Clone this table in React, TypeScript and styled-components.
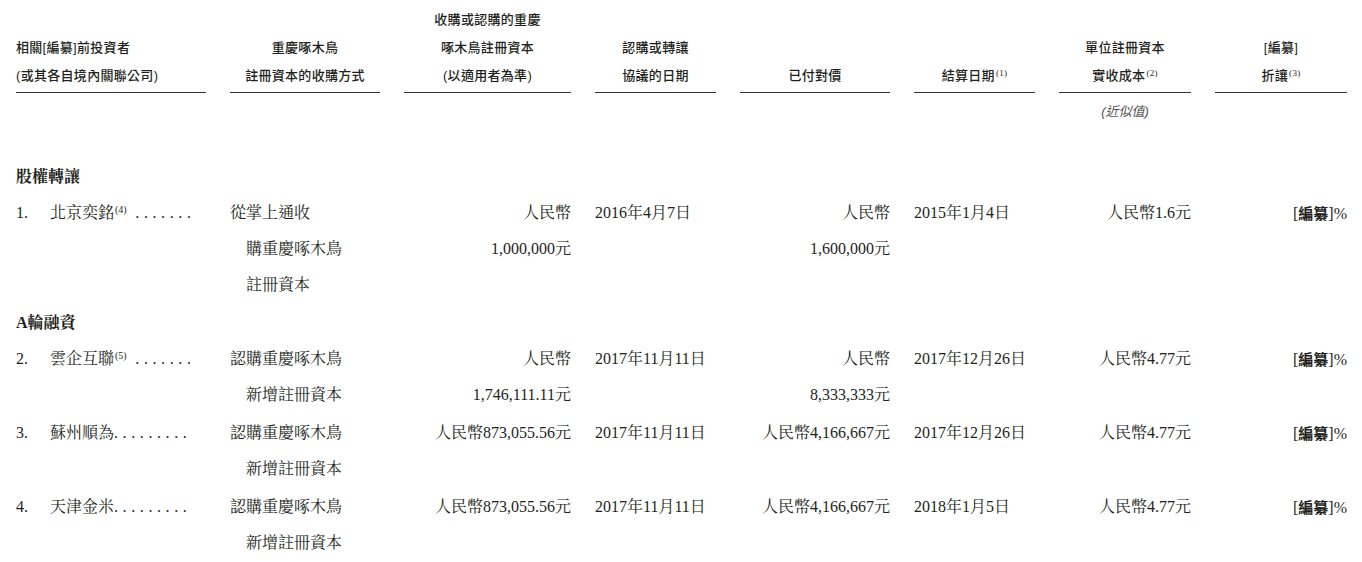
import React from "react";
import styled, { createGlobalStyle } from "styled-components";

const GlobalStyle = createGlobalStyle`
  html, body { margin: 0; padding: 0; background: #ffffff; }
  body { color: #231f20; }
`;

const SERIF = `"Liberation Serif", "Noto Serif CJK TC", "Noto Sans CJK TC", serif`;
const SANS = `"Liberation Sans", "Noto Sans CJK TC", sans-serif`;

const Page = styled.div`
  padding: 6px 15px 0 16px;
  width: 1331px;
`;

const Row = styled.div<{ $mb?: number; $mt?: number }>`
  display: grid;
  grid-template-columns: 190px 150px 167px 121px 150px 121px 132px 132px;
  column-gap: 24px;
  margin-top: ${(p) => p.$mt ?? 0}px;
  margin-bottom: ${(p) => p.$mb ?? 0}px;
`;

const HeadCell = styled.div<{ $align?: "left" | "center" }>`
  display: flex;
  flex-direction: column;
  justify-content: flex-end;
  text-align: ${(p) => p.$align ?? "center"};
  font-family: ${SANS};
  font-weight: 500;
  font-size: 13px;
  line-height: 28px;
  letter-spacing: 0.3px;
  padding-bottom: 2px;
  border-bottom: 1px solid #333;
`;

const HeadSup = styled.sup`
  font-family: ${SERIF};
  font-size: 9px;
  font-weight: 400;
  vertical-align: 4px;
  line-height: 0;
  margin-left: 1px;
`;

const Note = styled.div<{ $col: number }>`
  grid-column: ${(p) => p.$col};
  text-align: center;
  font-family: ${SANS};
  font-style: italic;
  font-size: 13px;
  line-height: 28px;
  color: #555;
`;

const Section = styled.div<{ $mt?: number }>`
  font-family: ${SERIF};
  font-weight: 700;
  font-size: 16px;
  line-height: 36px;
  margin-top: ${(p) => p.$mt ?? 0}px;
`;

const Cell = styled.div<{ $align?: "left" | "right" }>`
  font-family: ${SERIF};
  font-size: 16px;
  line-height: 36px;
  text-align: ${(p) => p.$align ?? "left"};
  white-space: nowrap;
`;

const NameCell = styled.div`
  display: flex;
  font-family: ${SERIF};
  font-size: 16px;
  line-height: 36px;
  white-space: nowrap;
`;

const Num = styled.span`
  width: 34px;
  flex: none;
`;

const Dots = styled.span`
  letter-spacing: 4.6px;
`;

const BodySup = styled.sup`
  font-size: 10px;
  vertical-align: 5px;
  line-height: 0;
  margin-left: 1px;
`;

const Line = styled.div<{ $indent?: boolean }>`
  padding-left: ${(p) => (p.$indent ? 16 : 0)}px;
`;

const Bold = styled.b`
  font-family: "Noto Sans CJK TC", sans-serif;
  font-weight: 700;
  font-size: 15px;
`;

type Entry = {
  num: string;
  name: string;
  sup?: string;
  dots: string;
  method: string[];
  capital: string[];
  date: string;
  paid: string[];
  settle: string;
  cost: string;
};

const section1: Entry[] = [
  {
    num: "1.",
    name: "北京奕銘",
    sup: "(4)",
    dots: " .......",
    method: ["從掌上通收", "購重慶啄木鳥", "註冊資本"],
    capital: ["人民幣", "1,000,000元"],
    date: "2016年4月7日",
    paid: ["人民幣", "1,600,000元"],
    settle: "2015年1月4日",
    cost: "人民幣1.6元",
  },
];

const section2: Entry[] = [
  {
    num: "2.",
    name: "雲企互聯",
    sup: "(5)",
    dots: " .......",
    method: ["認購重慶啄木鳥", "新增註冊資本"],
    capital: ["人民幣", "1,746,111.11元"],
    date: "2017年11月11日",
    paid: ["人民幣", "8,333,333元"],
    settle: "2017年12月26日",
    cost: "人民幣4.77元",
  },
  {
    num: "3.",
    name: "蘇州順為",
    dots: ".........",
    method: ["認購重慶啄木鳥", "新增註冊資本"],
    capital: ["人民幣873,055.56元"],
    date: "2017年11月11日",
    paid: ["人民幣4,166,667元"],
    settle: "2017年12月26日",
    cost: "人民幣4.77元",
  },
  {
    num: "4.",
    name: "天津金米",
    dots: ".........",
    method: ["認購重慶啄木鳥", "新增註冊資本"],
    capital: ["人民幣873,055.56元"],
    date: "2017年11月11日",
    paid: ["人民幣4,166,667元"],
    settle: "2018年1月5日",
    cost: "人民幣4.77元",
  },
];

const EntryRow: React.FC<{ e: Entry }> = ({ e }) => (
  <Row $mb={2}>
    <NameCell>
      <Num>{e.num}</Num>
      <span>
        {e.name}
        {e.sup && <BodySup>{e.sup}</BodySup>}
        <Dots>{e.dots}</Dots>
      </span>
    </NameCell>
    <Cell>
      {e.method.map((m, i) => (
        <Line key={i} $indent={i > 0}>
          {m}
        </Line>
      ))}
    </Cell>
    <Cell $align="right">
      {e.capital.map((c, i) => (
        <Line key={i}>{c}</Line>
      ))}
    </Cell>
    <Cell>{e.date}</Cell>
    <Cell $align="right">
      {e.paid.map((c, i) => (
        <Line key={i}>{c}</Line>
      ))}
    </Cell>
    <Cell>{e.settle}</Cell>
    <Cell $align="right">{e.cost}</Cell>
    <Cell $align="right">
      [<Bold>編纂</Bold>]%
    </Cell>
  </Row>
);

export default function App() {
  return (
    <>
      <GlobalStyle />
      <Page>
        <Row>
          <HeadCell $align="left">
            <div>相關[編纂]前投資者</div>
            <div>(或其各自境內關聯公司)</div>
          </HeadCell>
          <HeadCell>
            <div>重慶啄木鳥</div>
            <div>註冊資本的收購方式</div>
          </HeadCell>
          <HeadCell>
            <div>收購或認購的重慶</div>
            <div>啄木鳥註冊資本</div>
            <div>(以適用者為準)</div>
          </HeadCell>
          <HeadCell>
            <div>認購或轉讓</div>
            <div>協議的日期</div>
          </HeadCell>
          <HeadCell>
            <div>已付對價</div>
          </HeadCell>
          <HeadCell>
            <div>
              結算日期<HeadSup>(1)</HeadSup>
            </div>
          </HeadCell>
          <HeadCell>
            <div>單位註冊資本</div>
            <div>
              實收成本<HeadSup>(2)</HeadSup>
            </div>
          </HeadCell>
          <HeadCell>
            <div>[編纂]</div>
            <div>
              折讓<HeadSup>(3)</HeadSup>
            </div>
          </HeadCell>
        </Row>
        <Row $mt={5}>
          <Note $col={7}>(近似值)</Note>
        </Row>
        <Section $mt={33}>股權轉讓</Section>
        {section1.map((e) => (
          <EntryRow key={e.num} e={e} />
        ))}
        <Section>A輪融資</Section>
        {section2.map((e) => (
          <EntryRow key={e.num} e={e} />
        ))}
      </Page>
    </>
  );
}
